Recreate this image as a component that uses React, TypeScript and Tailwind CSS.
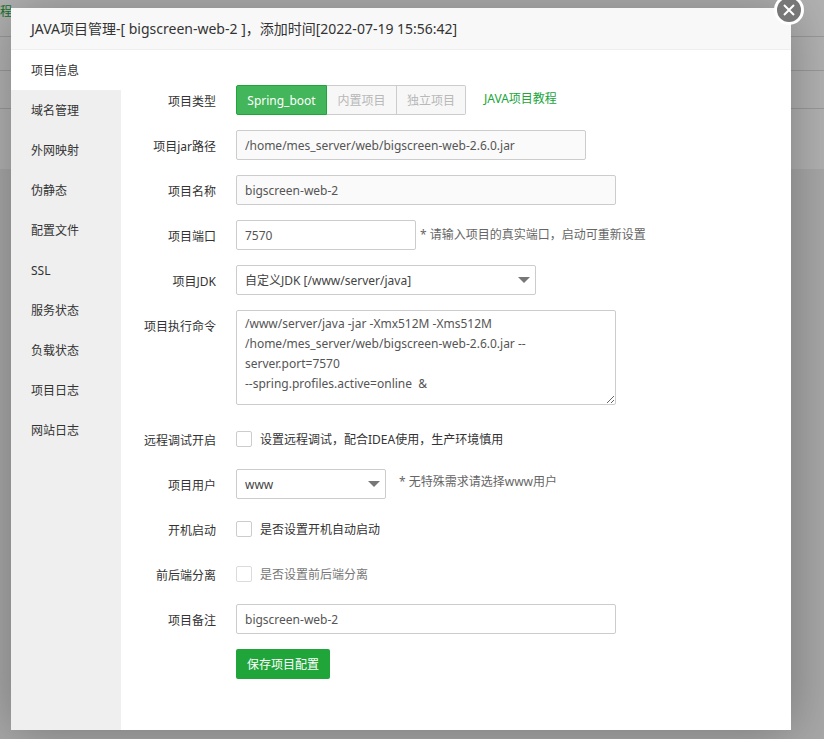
// src/pages/JavaProjectDialog.tsx
import React, { useState } from 'react';

const menus = [
  '项目信息', '域名管理', '外网映射', '伪静态', '配置文件',
  'SSL', '服务状态', '负载状态', '项目日志', '网站日志',
];

const command = `/www/server/java -jar -Xmx512M -Xms512M
/home/mes_server/web/bigscreen-web-2.6.0.jar --
server.port=7570
--spring.profiles.active=online  &`;

const inputClass = 'h-[30px] rounded-xs border border-[#ccc] px-2 text-[#555] outline-none';
const checkClass = 'size-4 appearance-none rounded-xs border border-[#ccc] bg-white checked:bg-[#20a53a]';
const typeClass = 'border-y border-r border-[#ccc] bg-[#f7f7f7] pt-px text-center text-[#b8b8b8]';

function Row({ label, htmlFor, children }: { label: string; htmlFor?: string; children: React.ReactNode }) {
  return (
    <div className="flex items-start">
      <label htmlFor={htmlFor} className="mr-5 w-[95px] shrink-0 text-right leading-[34px]">
        {label}
      </label>
      <div className="flex min-h-[30px] min-w-0 items-center">{children}</div>
    </div>
  );
}

function Select({ id, className, option }: { id: string; className: string; option: string }) {
  return (
    <div className={`relative ${className}`}>
      <select id={id} className="block h-[30px] w-full appearance-none rounded-xs border border-[#ccc] bg-white pt-px pr-6 pl-2 text-[#444] outline-none">
        <option>{option}</option>
      </select>
      <svg className="pointer-events-none absolute top-3 right-[6px] h-[6px] w-3" viewBox="0 0 12 6">
        <path d="M0 0h12L6 6z" fill="#777" />
      </svg>
    </div>
  );
}

// project list that sits behind the dialog
function PageBehind() {
  return (
    <div className="absolute inset-0 overflow-hidden bg-[#f1f1f1]">
      <div className="bg-white">
        <div className="flex h-[37px] border-b border-[#ddd]">
          <a href="#guide" className="text-[#20a53a] leading-6">程</a>
        </div>
        <div className="h-[34px] border-b border-[#ddd]" />
        <div className="h-[38px] border-b border-[#ddd]" />
        <div className="h-[60px]" />
      </div>
      <div className="absolute inset-0 bg-black/30" />
    </div>
  );
}

export default function App() {
  const [active, setActive] = useState('项目信息');

  return (
    <div className="relative flex min-h-screen overflow-hidden pt-2 pr-[33px] pb-[9px] pl-[11px] font-['Noto_Sans','Noto_Sans_CJK_SC',sans-serif] text-xs text-[#333]">
      <PageBehind />
      <div role="dialog" aria-labelledby="title" className="relative flex min-w-0 flex-1 flex-col bg-white shadow-[1px_1px_50px_rgba(0,0,0,0.3)]">
        <h2 id="title" className="h-[42px] border-b border-[#eee] bg-[#f8f8f8] pl-5 text-sm leading-[42px]">
          JAVA项目管理-[ bigscreen-web-2 ]，添加时间[2022-07-19 15:56:42]
        </h2>
        <button type="button" aria-label="关闭" className="absolute -top-[13px] -right-[13px] flex size-[30px] items-center justify-center rounded-full border-3 border-white bg-[#777]">
          <svg className="size-3" viewBox="0 0 12 12" fill="none" stroke="#fff" strokeWidth="2">
            <path d="M1 1l10 10M11 1L1 11" />
          </svg>
        </button>

        <div className="flex flex-1">
          <nav className="flex w-[110px] shrink-0 flex-col bg-[#efefef]">
            {menus.map((name) => (
              <button
                key={name}
                type="button"
                onClick={() => setActive(name)}
                className={`h-10 pt-0.5 pl-5 text-left ${active === name ? 'bg-white' : ''}`}
              >
                {name}
              </button>
            ))}
          </nav>

          <form className="flex min-w-0 flex-1 flex-col gap-[11px] pt-[35px] pb-12" onSubmit={(e) => e.preventDefault()}>
            <Row label="项目类型">
              <div className="flex h-[30px]">
                <button type="button" className="w-[91px] rounded-l-xs border border-[#20a53a] bg-[#43b55a] pt-px text-center text-white">Spring_boot</button>
                <button type="button" disabled className={`${typeClass} w-[70px]`}>内置项目</button>
                <button type="button" disabled className={`${typeClass} w-[69px] rounded-r-xs`}>独立项目</button>
              </div>
              <a href="#java" className="ml-[18px] pb-0.5 text-[#20a53a]">JAVA项目教程</a>
            </Row>
            <Row label="项目jar路径" htmlFor="jar">
              <input id="jar" readOnly defaultValue="/home/mes_server/web/bigscreen-web-2.6.0.jar" className={`${inputClass} w-[350px] bg-[#fafafa]`} />
            </Row>
            <Row label="项目名称" htmlFor="name">
              <input id="name" readOnly defaultValue="bigscreen-web-2" className={`${inputClass} w-[380px] bg-[#fafafa]`} />
            </Row>
            <Row label="项目端口" htmlFor="port">
              <input id="port" defaultValue="7570" className={`${inputClass} w-[180px]`} />
              <span className="ml-1 text-[#666]">* 请输入项目的真实端口，启动可重新设置</span>
            </Row>
            <Row label="项目JDK" htmlFor="jdk">
              <Select id="jdk" className="w-[300px]" option="自定义JDK [/www/server/java]" />
            </Row>
            <Row label="项目执行命令" htmlFor="cmd">
              <textarea
                id="cmd"
                defaultValue={command}
                className="mb-2 h-[95px] w-[380px] rounded-xs border border-[#ccc] px-2 py-[3px] leading-5 text-[#555] outline-none"
              />
            </Row>
            <Row label="远程调试开启">
              <input id="debug" type="checkbox" className={checkClass} />
              <label htmlFor="debug" className="pt-px pl-2">设置远程调试，配合IDEA使用，生产环境慎用</label>
            </Row>
            <Row label="项目用户" htmlFor="user">
              <Select id="user" className="w-[150px]" option="www" />
              <span className="ml-[13px] pb-1 text-[#666]">* 无特殊需求请选择www用户</span>
            </Row>
            <Row label="开机启动">
              <input id="boot" type="checkbox" className={checkClass} />
              <label htmlFor="boot" className="pt-px pl-2">是否设置开机自动启动</label>
            </Row>
            <Row label="前后端分离">
              <input id="split" type="checkbox" disabled className={`${checkClass} opacity-70`} />
              <label htmlFor="split" className="pt-px pl-2 text-[#777]">是否设置前后端分离</label>
            </Row>
            <Row label="项目备注" htmlFor="remark">
              <input id="remark" defaultValue="bigscreen-web-2" className={`${inputClass} w-[380px]`} />
            </Row>
            <button type="submit" className="ml-[115px] h-[30px] self-start rounded-xs bg-[#20a53a] px-[11px] pt-px text-white">
              保存项目配置
            </button>
          </form>
        </div>
      </div>
    </div>
  );
}
